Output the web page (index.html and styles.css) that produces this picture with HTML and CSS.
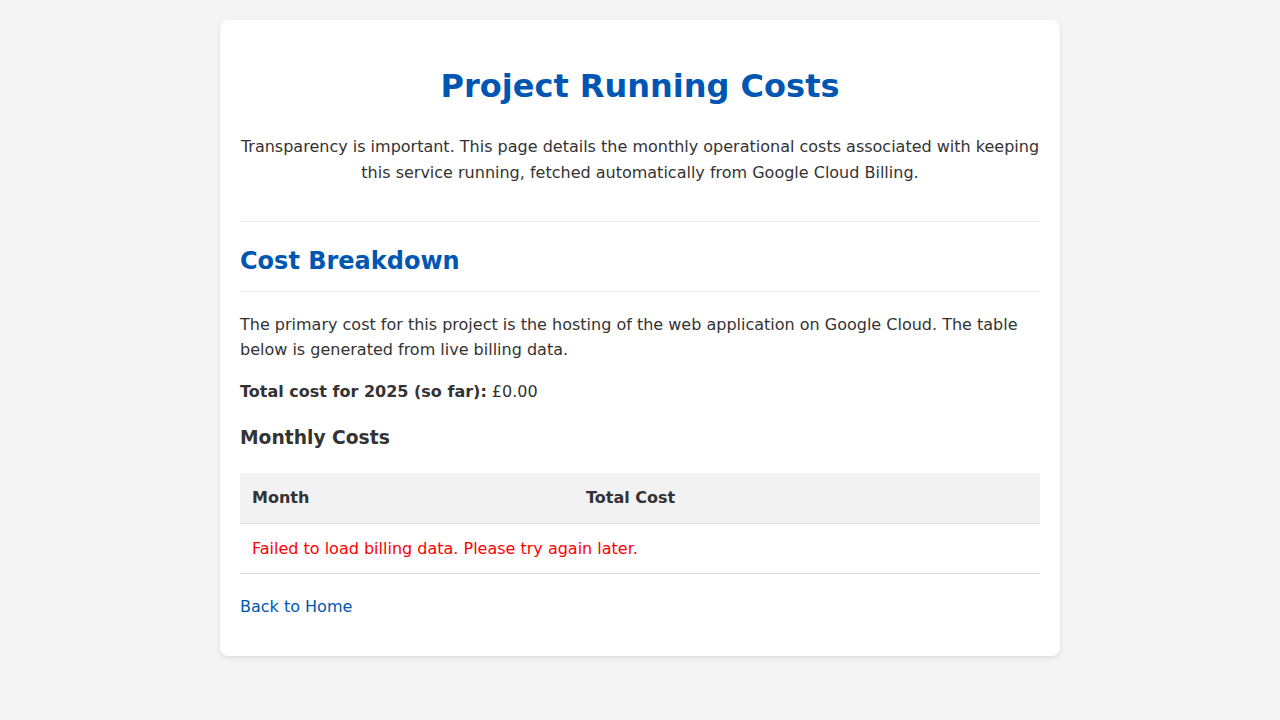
FILE: index.html
```html
<!DOCTYPE html>
<html lang="en">
<head>
<meta charset="utf-8">
<title>Project Running Costs</title>
<link rel="stylesheet" href="styles.css">
</head>
<body>
<div class="container">
  <header class="page-header">
    <h1>Project Running Costs</h1>
    <p>Transparency is important. This page details the monthly operational costs associated with keeping this service running, fetched automatically from Google Cloud Billing.</p>
  </header>
  <section>
    <h2>Cost Breakdown</h2>
    <p>The primary cost for this project is the hosting of the web application on Google Cloud. The table below is generated from live billing data.</p>
    <p><strong>Total cost for 2025 (so far):</strong> £0.00</p>
    <h3>Monthly Costs</h3>
    <table class="costs">
      <thead>
        <tr><th class="col-month">Month</th><th>Total Cost</th></tr>
      </thead>
      <tbody>
        <tr><td colspan="2" class="error">Failed to load billing data. Please try again later.</td></tr>
      </tbody>
    </table>
    <p class="back"><a href="#">Back to Home</a></p>
  </section>
</div>
</body>
</html>
```
FILE: styles.css
```css
body {
  margin: 0;
  padding: 20px;
  background: #f4f4f4;
  color: #333;
  font-family: "DejaVu Sans", sans-serif;
  font-size: 16px;
  line-height: 1.6;
}
.container {
  max-width: 800px;
  margin: 0 auto;
  background: #fff;
  padding: 20px;
  border-radius: 8px;
  box-shadow: 0 2px 4px rgba(0,0,0,0.1);
}
.page-header {
  text-align: center;
  border-bottom: 1px solid #eee;
  padding-bottom: 20px;
  margin-bottom: 20px;
}
h1 {
  color: #0056b3;
  font-size: 32px;
  margin: 21.44px 0;
}
h2 {
  color: #0056b3;
  font-size: 24px;
  margin: 0 0 20px;
  padding-bottom: 10px;
  border-bottom: 1px solid #eee;
}
h3 {
  font-size: 18.7px;
  margin: 19px 0 18px;
}
p { margin: 16px 0; }
.costs {
  width: 100%;
  border-collapse: collapse;
  margin-top: 20px;
}
.costs th, .costs td {
  text-align: left;
  padding: 12px;
  line-height: 25px;
  border-bottom: 1px solid #ddd;
}
.costs th { background: #f2f2f2; line-height: 26px; }
.col-month { width: 310px; }
.error { color: red; }
.back { margin: 20px 0 16px; }
a { color: #0056b3; text-decoration: none; }
```
